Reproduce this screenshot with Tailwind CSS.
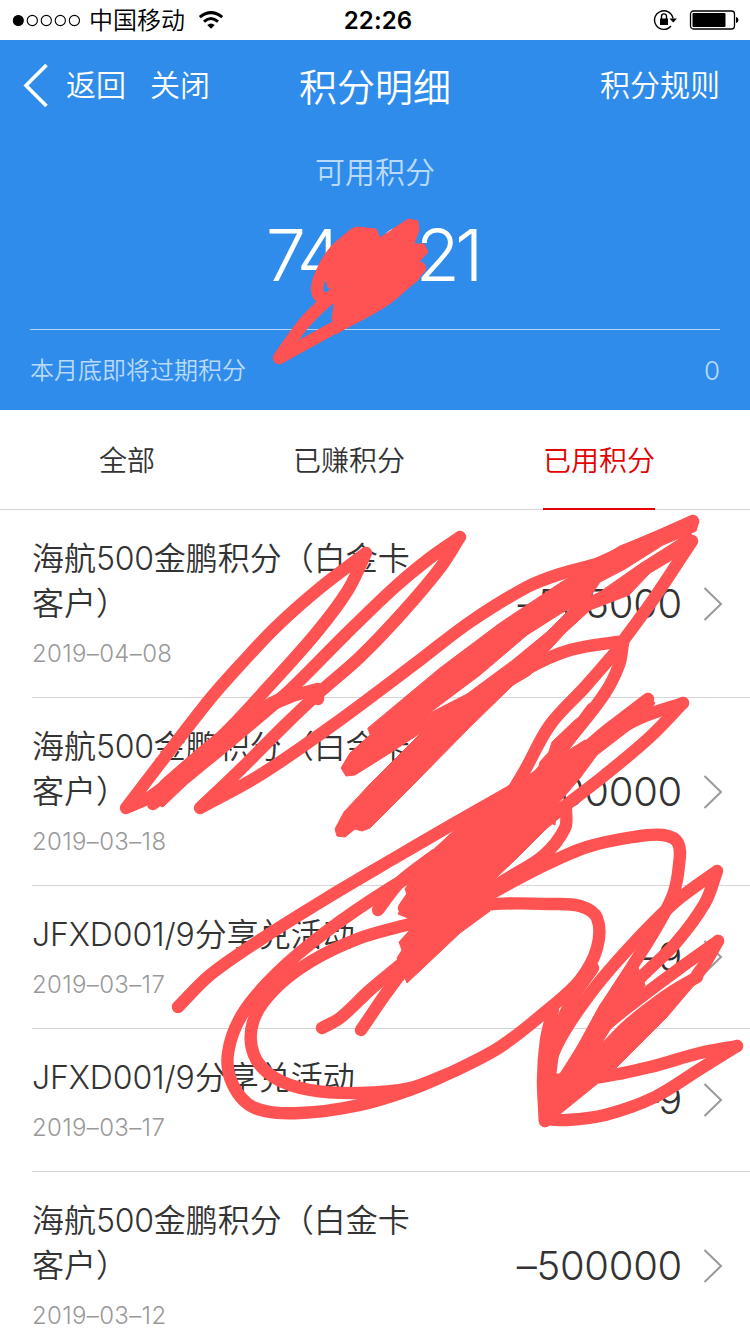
<!DOCTYPE html>
<html lang="zh-CN">
<head>
<meta charset="utf-8">
<title>积分明细</title>
<script src="https://cdn.jsdelivr.net/npm/@tailwindcss/browser@4"></script>
</head>
<body class="bg-white">
<div class="relative w-[750px] h-[1334px] overflow-hidden bg-white font-['Inter','Noto_Sans_CJK_SC',sans-serif] font-[350] text-[#333]">
  <div class="flex h-10 items-center justify-between pl-3 pr-[11px] text-black">
    <div class="flex w-[300px] items-center">
      <svg class="h-5 w-[70px]" viewBox="0 0 70 20" fill="none" stroke="#000" stroke-width="1.1"><circle cx="6.3" cy="10.5" r="5" fill="#000"/><circle cx="20.3" cy="10.5" r="5.1"/><circle cx="34.3" cy="10.5" r="5.1"/><circle cx="48.3" cy="10.5" r="5.1"/><circle cx="62.4" cy="10.5" r="5.1"/></svg>
      <span class="ml-[7px] pt-0.5 text-2xl leading-[38px]">中国移动</span>
      <svg class="ml-[13px] h-5 w-[26px]" viewBox="0 0 26 20" fill="none" stroke="#000" stroke-width="3"><path d="M1.800 7.200Q13-2 24.200 7.200"/><path d="M6 11.600Q13 5.400 20 11.600"/><path d="M9.200 15Q13 11.800 16.800 15L13 18.700Z" fill="#000" stroke="none"/></svg>
    </div>
    <span class="ml-[5px] pt-0.5 text-2xl font-semibold leading-[38px] tracking-[0.1px]">22:26</span>
    <div class="flex w-[300px] items-center justify-end gap-3">
      <svg class="h-[22px] w-6" viewBox="0 0 24 22" fill="none" stroke="#000" stroke-width="1.4"><path d="M20 9.500A9.300 9.300 0 1 0 18 17"/><path d="M16.500 9.500H24L20.200 13.500Z" fill="#000" stroke="none"/><rect x="7" y="9.500" width="8" height="6.500" fill="#000" stroke="none"/><path d="M8.500 10V7.400a2.500 2.500 0 0 1 5 0V10"/></svg>
      <svg class="h-5 w-[50px]" viewBox="0 0 50 20"><rect x="1.500" y="1" width="44" height="18" rx="3" fill="none" stroke="#000" stroke-width="1.300"/><rect x="3.500" y="3" width="33" height="14" rx="1" fill="#000"/><path d="M47 7Q49.500 7.500 49.500 10T47 13Z"/></svg>
    </div>
  </div>

  <div class="h-[370px] bg-[#308ceb] px-[30px] text-white">
    <div class="flex h-[90px] items-center justify-between text-[30px] leading-none">
      <div class="flex w-[200px] items-center">
        <svg class="-ml-[7px] h-[44px] w-[26px]" viewBox="0 0 26 44" fill="none" stroke="#fff" stroke-width="3.600"><path d="M23.500 2L3 22.500L23.500 43"/></svg>
        <span class="ml-[17px]">返回</span><span class="ml-6">关闭</span>
      </div>
      <h1 class="pt-[3px] text-[38px]">积分明细</h1>
      <div class="w-[200px] text-right">积分规则</div>
    </div>
    <div class="pt-[26px] text-center text-[30px] leading-[32px] text-[#badaf9]">可用积分</div>
    <div class="mt-[31px] h-[110px] pr-[6px] text-center text-[72px] font-[350] leading-[72px] tracking-[-5px]">740221</div>
    <div class="flex h-[81px] items-center justify-between border-t border-[#b5d7f8] pt-0.5 text-2xl text-[#badaf9]"><span>本月底即将过期积分</span><span class="text-[26px] font-light">0</span></div>
  </div>

  <div class="flex h-[100px] justify-between border-b border-[#d5d5d5] pl-[99px] pr-[95px] text-[28px] leading-[103px]">
    <span>全部</span><span>已赚积分</span><span class="h-[100px] border-b-2 border-[#e60000] text-[#e60000]">已用积分</span>
  </div>

  <ul id="list"></ul>

  <svg id="marks" class="pointer-events-none absolute left-0 top-0 h-[1334px] w-[750px]" viewBox="0 0 750 1334" fill="none" stroke="#ff5252" stroke-width="12.4" stroke-linecap="round" stroke-linejoin="round"></svg>
</div>
<script>
const bank = '海航<span class="tracking-[-0.3px]">500</span>金鹏积分（白金卡<br>客户）';
const share = '<span class="tracking-[-0.1px]">JFXD001/9</span>分享兑活动';
const rows = [
  [bank, '2019–04–08', '–505000'],
  [bank, '2019–03–18', '–500000'],
  [share, '2019–03–17', '–9'],
  [share, '2019–03–17', '–9'],
  [bank, '2019–03–12', '–500000'],
];
document.getElementById('list').innerHTML = rows.map(([title, date, amount]) => `
  <li class="ml-8 flex items-center justify-between border-b border-[#d5d5d5] pr-[27px]">
    <div class="pt-[26px] pb-[25px]">
      <div class="text-[32px] leading-[45px]">${title}</div>
      <div class="mt-2.5 text-2xl font-light leading-[36px] tracking-[0.35px] text-[#999]">${date}</div>
    </div>
    <div class="flex items-center gap-[21px]">
      <span class="text-[40px] leading-none tracking-[-0.3px]">${amount}</span>
      <svg class="h-[34px] w-5" viewBox="0 0 20 34" fill="none" stroke="#999" stroke-width="2"><path d="M1.500 1L18 17L1.500 33"/></svg>
    </div>
  </li>`).join('');

// Freehand marker strokes: x,y points joined by a smooth curve; "|" marks a sharp turn at the point before it
const strokes = [
  '356,234 336,250 322,272 318,294 332,298 350,290 372,268',
  '336,292 305,322 279,358 | 330,330 385,300 420,268',
  '338,300 360,290 385,270',
  '366,553 320,588 277,626 240,665 210,699 165,757 126,808 | 153,795 220,738 270,685 317,632 348,590 366,553',
  '153,804 195,770 240,733 290,690 345,635 395,587 430,558 460,537 | 440,568 403,612 360,657 320,692 285,725 240,770 200,808 | 260,775 333,725 420,660 470,622 527,587 560,574 597,564',
  '318,699 318,689 | 290,697 255,714 215,742 165,785',
  '693,521 650,540 597,564',
  '692,541 | 655,597 623,641 | 570,650 525,670 490,695',
  '619,648 585,687 550,725 525,770 512,792',
  '623,643 619,665 605,693 575,732 545,765',
  '592,709 565,745 530,785',
  '648,699 610,728 570,760 515,792',
  '683,703 640,718 600,740 555,768 530,790',
  '683,703 650,737 605,775 560,810 500,860',
  '178,1007 210,975 260,940 327,898 393,859 460,820 513,790',
  '470,844 440,860 390,888 327,931 277,973 243,1013 228,1053 233,1085 255,1108 300,1113 360,1105 410,1090 450,1073 500,1047 550,1008 580,980 597,948 597,918 580,906 550,904 485,905 410,924 360,938 310,962 273,991 253,1022 254,1055 275,1078 310,1090 360,1093 410,1088 450,1073',
  '566,808 565,828 543,856 500,883 477,901 | 543,866 587,847 633,837 663,835 678,843 679,865 673,895 655,930 633,965 603,1012 580,1053 553,1095',
  '593,968 573,998 556,1038 550,1075',
  '553,1010 546,1040 543,1080 545,1121',
  '545,1121 545,1085 557,1045 590,994 630,947 675,902 717,871 | 705,903 675,944 635,984 600,1035 577,1080',
  '718,941 680,968 640,998 597,1034 575,1070 545,1120',
  '718,941 706,962 697,975',
  '697,977 667,995 625,1028 580,1077',
  '737,1046 700,1053 650,1067 600,1077 550,1080',
  '737,1046 700,1069 655,1097 605,1115 567,1120 545,1119',
  '400,965 370,990 340,1018 322,1028',
  '407,965 385,995 361,1030 | 400,975 435,945',
  '378,910 400,882 435,855',
  '404,908 430,870',
];
const fills = [
  '343,236 350,230 356,227 376,229 380,238 408,219 418,221 419,230 414,244 424,244 428,252 418,263 424,270 418,280 395,299 365,317 336,334 332,318 334,305 350,290 345,287 328,288 324,272 330,250',
  '368,728 440,668 500,623 560,583 597,560 620,546 655,532 693,515 699,521 696,531 663,545 625,569 600,582 590,597 560,614 527,635 480,675 432,711 422,732 390,753 355,775 346,776 341,768 350,753 370,735',
  '432,712 467,694 513,660 547,632 575,604 600,592 640,564 670,545 690,532 697,544 675,558 650,573 629,595 590,610 565,633 542,658 530,675 513,685 470,727 410,788 370,828 362,831 355,829 345,837 337,836 335,829 344,812 370,784 422,732',
  '510,786 545,765 585,740 600,748 572,785 555,802 569,808 557,818 517,858 477,896 490,911 460,933 407,983 397,958 402,950 399,942 410,930 408,918 398,914 408,897 405,889 415,875 433,850 460,825',
  '583,743 648,695 655,703 645,718 597,755 580,778 557,805 555,825 513,806 549,776',
  '597,706 590,722 556,757 547,758 552,742 575,720',
  '655,926 637,965 645,985 640,995 600,1030 585,1055 583,1037 600,1005 627,967',
  '701,977 667,1017 617,1067 597,1084 560,1114 543,1123 548,1095 575,1078 600,1050 640,1018 670,990 697,970',
  '198,753 222,738 255,705 285,690 240,733 163,807 152,802',
];
const marks = document.getElementById('marks');
const parse = s => s.trim().split(/\s+/).map(p => p.split(',').map(Number));
function smooth(pts, start) {
  let d = start ? 'M' + pts[0] : '';
  for (let i = 0; i < pts.length - 1; i++) {
    const a = pts[Math.max(0, i - 1)], b = pts[i], c = pts[i + 1], e = pts[Math.min(pts.length - 1, i + 2)];
    const m = Math.hypot(c[0] - b[0], c[1] - b[1]) / 3;
    const h = (p, q) => { const l = Math.hypot(q[0] - p[0], q[1] - p[1]) || 1; return [(q[0] - p[0]) / l * m, (q[1] - p[1]) / l * m]; };
    const u = h(a, c), v = h(b, e);
    d += `C${b[0] + u[0]},${b[1] + u[1]} ${c[0] - v[0]},${c[1] - v[1]} ${c}`;
  }
  return d;
}
function stroke(s) {
  let last = null;
  return s.split('|').map(part => {
    const pts = parse(part);
    const all = last ? [last, ...pts] : pts;
    const d = smooth(all, !last);
    last = pts[pts.length - 1];
    return d;
  }).join('');
}
marks.innerHTML = strokes.map(s => `<path d="${stroke(s)}"/>`).join('') +
  fills.map(s => `<polygon points="${s}" fill="#ff5252" stroke-width="1"/>`).join('');
</script>
</body>
</html>
